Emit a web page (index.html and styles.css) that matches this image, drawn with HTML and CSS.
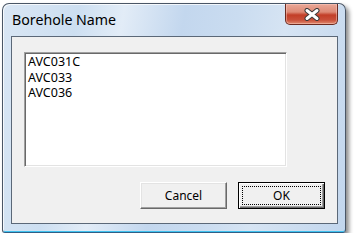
FILE: index.html
```html
<!DOCTYPE html>
<html lang="en">
<head>
    <meta charset="UTF-8">
    <meta name="viewport" content="width=device-width, initial-scale=1.0">
    <title>Borehole Name</title>
    <link rel="stylesheet" href="styles.css">
</head>
<body>
    <div class="window">
        <div class="titlebar">
            <span class="title">Borehole Name</span>
            <button class="close" aria-label="Close">
                <svg width="16" height="13" viewBox="0 0 16 13">
                    <path d="M3 2.5 L13 10.5 M13 2.5 L3 10.5" stroke="#3a3a3a" stroke-width="5" stroke-linecap="round"/>
                    <path d="M3 2.5 L13 10.5 M13 2.5 L3 10.5" stroke="#ffffff" stroke-width="3" stroke-linecap="round"/>
                </svg>
            </button>
        </div>

        <div class="client">
            <ul class="listbox">
                <li>AVC031C</li>
                <li>AVC033</li>
                <li>AVC036</li>
            </ul>

            <div class="actions">
                <button class="btn">Cancel</button>
                <button class="btn default"><span class="focus">OK</span></button>
            </div>
        </div>
    </div>
</body>
</html>
```

FILE: styles.css
```css
body {
    margin: 0;
    padding: 0;
    background: #ffffff;
    font-family: 'Noto Sans', 'DejaVu Sans', sans-serif;
    color: #000;
}

.window {
    box-sizing: border-box;
    width: 344px;
    height: 230px;
    margin: 3px 0 0 2px;
    padding: 0 7px 8px 8px;
    display: flex;
    flex-direction: column;
    border: 1px solid #4a5666;
    border-bottom-color: #2f5f86;
    border-radius: 7px 7px 3px 3px;
    background: linear-gradient(100deg, #d9e6f4 0%, #cddff1 20%, #e2ecf7 32%, #c3d7ee 48%, #cadcf0 62%, #d6e4f3 75%, #c2d6ed 100%);
    box-shadow: inset 1px 1px 0 rgba(255, 255, 255, 0.75),
                inset 0 -1px 0 #3fc2ef,
                3px 3px 4px rgba(0, 0, 0, 0.45);
}

.titlebar {
    display: flex;
    align-items: flex-start;
    justify-content: space-between;
    height: 32px;
}

.title {
    margin: 6px 0 0 1px;
    font-size: 14.2px;
    line-height: 20px;
    color: #000;
}

.close {
    width: 53px;
    height: 21px;
    padding: 0;
    display: flex;
    align-items: center;
    justify-content: center;
    border: 1px solid #6b2a20;
    border-top: none;
    border-radius: 0 0 5px 5px;
    background: linear-gradient(to bottom, #e9a797 0%, #dd8a76 40%, #c23e27 55%, #c9503a 80%, #e08a6f 100%);
    box-shadow: inset 0 0 0 1px rgba(255, 210, 200, 0.45);
}

.client {
    flex: 1;
    display: flex;
    flex-direction: column;
    padding: 15px 12px 0 12px;
    background: #f0f0f0;
    border: 1px solid #5b6878;
}

.listbox {
    box-sizing: border-box;
    width: 263px;
    height: 115px;
    margin: 0;
    padding: 1px 0 0 2px;
    list-style: none;
    background: #ffffff;
    border: 1px solid;
    border-color: #a0a0a0 #ffffff #ffffff #a0a0a0;
    box-shadow: inset 1px 1px 0 #696969, inset -1px -1px 0 #e3e3e3;
    font-size: 12.5px;
    line-height: 15.5px;
}

.listbox li {
    padding-left: 1px;
}

.actions {
    display: flex;
    justify-content: flex-end;
    gap: 11px;
    margin-top: 15px;
}

.btn {
    box-sizing: border-box;
    width: 87px;
    height: 27px;
    padding: 0;
    display: flex;
    align-items: center;
    justify-content: center;
    font-family: 'Noto Sans', 'DejaVu Sans', sans-serif;
    font-size: 12px;
    color: #000;
    background: #f0f0f0;
    border: 1px solid;
    border-color: #ffffff #696969 #696969 #ffffff;
    box-shadow: inset -1px -1px 0 #a0a0a0, inset 1px 1px 0 #e3e3e3;
}

.btn.default {
    border: 1px solid #000;
    box-shadow: inset 1px 1px 0 #ffffff, inset -1px -1px 0 #696969, inset -2px -2px 0 #a0a0a0;
    padding: 3px;
}

.focus {
    box-sizing: border-box;
    width: 100%;
    height: 100%;
    display: flex;
    align-items: center;
    justify-content: center;
    border: 1px dotted #000;
}
```
